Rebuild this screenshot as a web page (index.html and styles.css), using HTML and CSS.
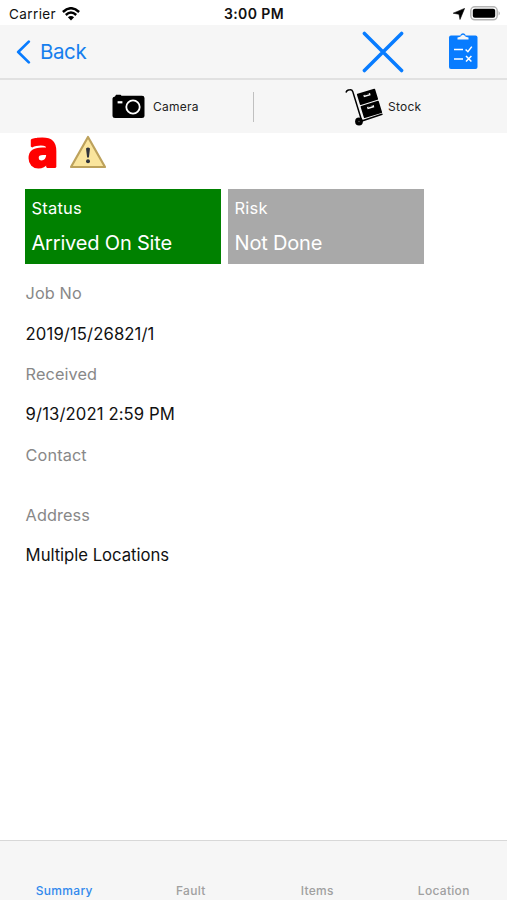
FILE: index.html
```html
<!DOCTYPE html>
<html lang="en">
<head>
<meta charset="utf-8">
<title>Job Summary</title>
<link rel="stylesheet" href="styles.css">
</head>
<body>
<div class="app">
  <div class="statusbar">
    <div class="carrier"><span class="carrier-name">Carrier</span>
      <svg class="wifi" width="18" height="14" viewBox="0 0 18 14"><g fill="none" stroke="#000" stroke-width="2.4"><path d="M.9 5Q9-2.6 17.1 5"/><path d="M3.8 8Q9 3.2 14.2 8"/></g><path d="M5.9 10.2Q9 7.7 12.1 10.2L9 13.5Z"/></svg>
    </div>
    <div class="clock">3:00 PM</div>
    <div class="power">
      <svg width="12" height="12" viewBox="0 0 12 12"><path d="M11.6.4 7 11.5 6 6.3 .2 5.2Z" stroke="#000" stroke-width=".6"/></svg>
      <svg width="31" height="15" viewBox="0 0 31 15"><rect x=".8" y=".8" width="26.4" height="13" rx="4" fill="#fff" stroke="#b5b5b5" stroke-width="1.5"/><rect x="2.8" y="2.8" width="22.4" height="9" rx="2"/><path d="M28.6 5Q31 7.3 28.6 9.6Z" fill="#aaa"/></svg>
    </div>
  </div>
  <header class="nav">
    <a class="back">
      <svg width="15" height="24" viewBox="0 0 15 24"><path d="M12.8 1.6 2.2 12 12.8 22.4" fill="none" stroke="#087cff" stroke-width="2.7" stroke-linecap="round" stroke-linejoin="round"/></svg>
      <span>Back</span>
    </a>
    <div class="actions">
      <svg width="42" height="42" viewBox="0 0 42 42"><path d="M2.4 2.4 39.6 39.6M39.6 2.4 2.4 39.6" stroke="#087cff" stroke-width="3.5" stroke-linecap="round"/></svg>
      <svg width="30" height="37" viewBox="0 0 30 37"><rect x="1" y="2.5" width="28.5" height="33.5" rx="2" fill="#087cff"/><path d="M9.5 6.4V4.4L12.3 3.8Q15-1 17.7 3.8L20.5 4.4V6.4Z" fill="#f6f6f6"/><path d="M12 2.5Q15-2 18 2.5L16.5 2.6Q15 .8 13.5 2.6Z" fill="#087cff"/><g fill="none" stroke="#fff" stroke-width="1.5"><path d="M6 16.4H15M6 25.9H15M17.6 16.5 19.9 18.7 23.8 13.6M18 23 23.4 28.6M23.4 23 18 28.6"/></g></svg>
    </div>
  </header>
  <div class="toolbar">
    <div class="tool camera">
      <svg width="33" height="25" viewBox="0 0 33 25"><path d="M3 2.6 4 .8H8.5L9.5 1.8H30Q32.5 1.8 32.5 4V22Q32.5 24 30 24H3Q.5 24 .5 22V4.6Q.5 3 3 2.6Z"/><circle cx="21" cy="13" r="6.7" fill="none" stroke="#fff" stroke-width="1.8"/><rect x="5.6" y="7.2" width="4.8" height="2.2" fill="#fff"/></svg>
      <span>Camera</span>
    </div>
    <div class="tool stock">
      <svg width="39" height="38" viewBox="0 0 39 38"><path d="M1.2 4Q2 1.7 4.8 1.7 7 1.4 7.7 3.4L16.8 33 37 26.3" fill="none" stroke="#000" stroke-width="1.5" stroke-linecap="round"/><g transform="rotate(-17 12 7)"><rect x="12" y="6" width="19" height="11.6" rx=".8"/><rect x="12" y="18.7" width="19" height="12.6" rx=".8"/><path d="M18 9H25V11.2H18ZM18 21.5H25V23.7H18Z" fill="#f6f6f6"/><path d="M19.2 9.2H23.8M19.2 21.7H23.8" stroke="#000"/></g><circle cx="14" cy="33.5" r="3.9"/><circle cx="14" cy="33.5" r=".8" fill="#555"/></svg>
      <span>Stock</span>
    </div>
  </div>
  <main class="content">
    <div class="badges">
      <svg class="brand" width="34" height="36" viewBox="0 0 34 36"><text class="brand-letter" x="0" y="0" transform="translate(2.4 32.4) scale(1.14 1.25)">a</text></svg>
      <svg width="38" height="34" viewBox="0 0 38 34"><path d="M19 2 36 32H2Z" fill="#fae59d" stroke="#bda25c" stroke-width="2.2" stroke-linejoin="round"/><path d="M17 13.5Q19 11.5 21 13.5L19.9 22.5H18.1Z" fill="#30343c"/><circle cx="19" cy="26.3" r="2" fill="#30343c"/></svg>
    </div>
    <div class="cards">
      <section class="card arrived"><div class="card-label">Status</div><div class="card-value">Arrived On Site</div></section>
      <section class="card pending"><div class="card-label">Risk</div><div class="card-value">Not Done</div></section>
    </div>
    <dl class="details">
      <dt>Job No</dt><dd class="job">2019/15/26821/1</dd>
      <dt>Received</dt><dd>9/13/2021 2:59 PM</dd>
      <dt>Contact</dt><dd class="empty"></dd>
      <dt>Address</dt><dd class="address">Multiple Locations</dd>
    </dl>
  </main>
  <nav class="tabs">
    <a class="active">Summary</a><a>Fault</a><a>Items</a><a>Location</a>
  </nav>
</div>
</body>
</html>
```
FILE: styles.css
```css
* { box-sizing: border-box; }
body { margin: 0; background: #fff; color: #111; font-family: Inter, "Liberation Sans", sans-serif; }
svg { display: block; flex: none; }
.app { height: 900px; display: flex; flex-direction: column; overflow: hidden; }
.statusbar { height: 25px; flex: none; display: grid; grid-template-columns: 1fr auto 1fr; align-items: center; padding: 2px 6px 0 9px; font-size: 13.5px; }
.carrier { display: flex; align-items: center; gap: 6px; letter-spacing: .4px; }
.clock { font-weight: 600; font-size: 14px; letter-spacing: .4px; padding-right: 2px; }
.power { display: flex; justify-content: flex-end; align-items: center; gap: 5px; }
.nav { height: 55px; flex: none; background: #f6f6f6; border-bottom: 2px solid #e1e1e1; display: flex; justify-content: space-between; align-items: center; padding: 0 29px 0 16px; }
.back { display: flex; align-items: center; gap: 9px; color: #167fee; font-size: 20.5px; letter-spacing: -.4px; }
.actions { display: flex; align-items: center; gap: 44px; }
.toolbar { height: 53px; flex: none; background: #f6f6f6; display: grid; grid-template-columns: 254px 1fr; align-items: center; }
.tool { height: 30px; display: flex; align-items: center; font-size: 12px; letter-spacing: .25px; color: #222; }
.tool span { margin-top: -1px; }
.camera { gap: 8px; padding-left: 112px; border-right: 1px solid #c0c0c0; }
.stock { gap: 4px; padding-left: 91px; }
.content { flex: 1; padding: 0 25px; }
.badges { height: 56px; display: flex; align-items: flex-start; gap: 10px; }
.badges svg { margin-top: 2px; }
.brand { overflow: visible; }
.brand-letter { font: bold 41px "DejaVu Sans", sans-serif; fill: red; stroke: red; stroke-width: 1.7px; stroke-linejoin: bevel; }
.cards { display: flex; gap: 7px; }
.card { width: 196px; height: 75px; padding: 8px 6.5px; color: #fff; }
.arrived { background: #008100; }
.pending { background: #a9a9a9; }
.card-label { height: 22px; line-height: 22px; font-size: 16.5px; letter-spacing: .2px; }
.card-value { margin-top: 10px; height: 28px; line-height: 28px; font-size: 20px; letter-spacing: -.18px; }
.details { margin: 9.4px 0 0; padding-left: .6px; font-size: 16.3px; }
.details dt, .details dd { margin: 0; height: 40.3px; line-height: 40.3px; }
.details dd { font-size: 16.7px; letter-spacing: .1px; }
.details dt { color: #888; letter-spacing: .1px; }
.details dd.address { letter-spacing: -.04px; }
.details dd.empty { height: 20px; }
.tabs { height: 60px; flex: none; display: grid; grid-template-columns: repeat(4, 1fr); align-items: end; text-align: center; padding: 0 0 1px 1px; background: #f6f6f6; border-top: 1px solid #d8d8d8; font-size: 12px; line-height: 16px; font-weight: 500; letter-spacing: .3px; color: #a0a0a0; }
.tabs .active { color: #3289ed; }
```
